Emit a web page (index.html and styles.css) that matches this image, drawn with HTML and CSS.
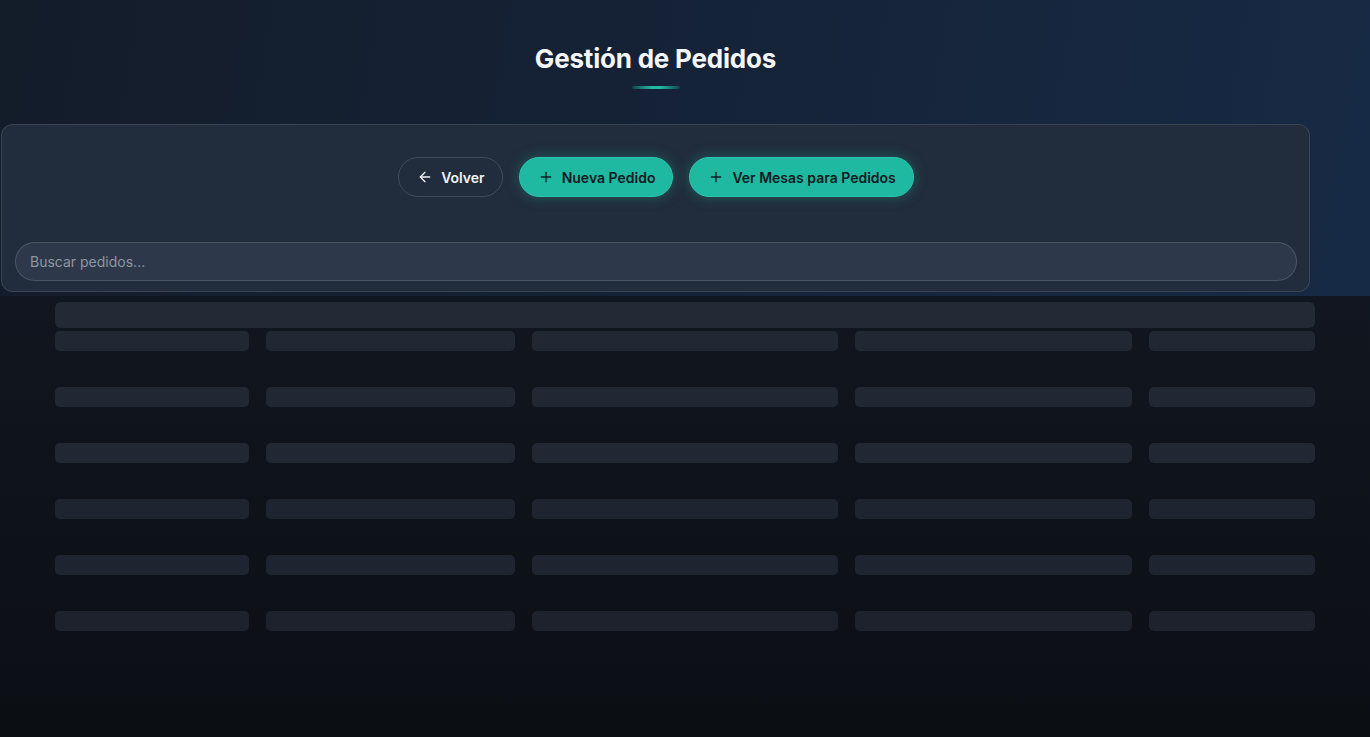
FILE: index.html
```html
<!DOCTYPE html>
<html lang="es">
<head>
<meta charset="utf-8">
<title>Gestión de Pedidos</title>
<link rel="stylesheet" href="styles.css">
</head>
<body>
<header class="top">
  <div class="top-inner">
    <h1 class="title">Gestión de Pedidos</h1>
    <div class="title-bar"></div>
    <section class="panel">
      <div class="actions">
        <button class="btn btn-ghost">
          <svg width="16" height="16" viewBox="0 0 24 24" fill="none" stroke="currentColor" stroke-width="2" stroke-linecap="round" stroke-linejoin="round"><path d="M19 12H5"/><path d="M12 19l-7-7 7-7"/></svg>
          Volver
        </button>
        <button class="btn btn-teal">
          <svg width="16" height="16" viewBox="0 0 24 24" fill="none" stroke="currentColor" stroke-width="2" stroke-linecap="round"><path d="M12 5v14"/><path d="M5 12h14"/></svg>
          Nueva Pedido
        </button>
        <button class="btn btn-teal">
          <svg width="16" height="16" viewBox="0 0 24 24" fill="none" stroke="currentColor" stroke-width="2" stroke-linecap="round"><path d="M12 5v14"/><path d="M5 12h14"/></svg>
          Ver Mesas para Pedidos
        </button>
      </div>
      <input class="search" type="text" placeholder="Buscar pedidos...">
    </section>
  </div>
</header>

<main class="table-skeleton">
  <div class="sk-head"></div>
  <div class="sk-rows">
    <div class="sk-row"><span></span><span></span><span></span><span></span><span></span></div>
    <div class="sk-row"><span></span><span></span><span></span><span></span><span></span></div>
    <div class="sk-row"><span></span><span></span><span></span><span></span><span></span></div>
    <div class="sk-row"><span></span><span></span><span></span><span></span><span></span></div>
    <div class="sk-row"><span></span><span></span><span></span><span></span><span></span></div>
    <div class="sk-row"><span></span><span></span><span></span><span></span><span></span></div>
  </div>
</main>
</body>
</html>
```

FILE: styles.css
```css
* { box-sizing: border-box; }

html, body {
  margin: 0;
  height: 100%;
}

body {
  font-family: Inter, "Noto Sans", "Liberation Sans", sans-serif;
  background: linear-gradient(180deg, #131a25 0%, #10151e 50%, #0b0f14 100%);
  color: #fff;
  overflow: hidden;
}

/* Header band */
.top {
  height: 296px;
  background: linear-gradient(100deg, #131c29 0%, #152236 45%, #172a45 100%);
}

.top-inner {
  width: 1309px;
  margin-left: 1px;
  padding-top: 43px;
  display: flex;
  flex-direction: column;
  align-items: center;
}

.title {
  margin: 0;
  font-size: 26px;
  line-height: 32px;
  font-weight: 700;
  letter-spacing: -0.2px;
  color: #f4f6f9;
}

.title-bar {
  width: 48px;
  height: 3px;
  margin-top: 11px;
  border-radius: 2px;
  background: linear-gradient(90deg, rgba(31,185,160,0.2), #1fb9a0 40%, #1fb9a0 60%, rgba(31,185,160,0.2));
}

/* Panel with actions and search */
.panel {
  align-self: stretch;
  margin-top: 35px;
  height: 168px;
  padding: 32px 12px 10px 13px;
  border: 1px solid rgba(255,255,255,0.12);
  border-radius: 12px;
  background: #212c3c;
  display: flex;
  flex-direction: column;
}

.actions {
  display: flex;
  justify-content: center;
  gap: 16px;
}

.btn {
  height: 40px;
  border-radius: 20px;
  padding: 0 17px 0 18px;
  display: inline-flex;
  align-items: center;
  gap: 8px;
  font-family: inherit;
  font-size: 14px;
  font-weight: 600;
  letter-spacing: 0;
  cursor: pointer;
}

.btn-ghost {
  background: transparent;
  color: #f1f3f6;
  border: 1px solid rgba(255,255,255,0.14);
}

.btn-teal {
  background: #1fb8a0;
  color: #0f1a22;
  border: 1px solid #2ac6ad;
  box-shadow: 0 0 14px rgba(31,185,160,0.35);
}

.search {
  margin-top: 45px;
  height: 40px;
  width: 100%;
  border-radius: 20px;
  border: 1px solid rgba(255,255,255,0.14);
  background: #2d394a;
  padding: 0 14px;
  font-family: inherit;
  font-size: 14px;
  color: #e6e9ee;
  outline: none;
}

.search::placeholder {
  color: #8d96a2;
}

/* Table loading skeleton */
.table-skeleton {
  padding: 6px 55px 0;
}

.sk-head {
  height: 26px;
  border-radius: 6px;
  background: #232a36;
}

.sk-rows {
  margin-top: 3px;
  display: flex;
  flex-direction: column;
  gap: 36px;
}

.sk-row {
  display: grid;
  grid-template-columns: 194fr 249fr 305fr 277fr 166fr;
  column-gap: 17px;
}

.sk-row span {
  height: 20px;
  border-radius: 5px;
  background: #222833;
}

.sk-row:nth-child(n+4) span { background: #1f2530; }
.sk-row:nth-child(n+6) span { background: #1d222c; }
```
